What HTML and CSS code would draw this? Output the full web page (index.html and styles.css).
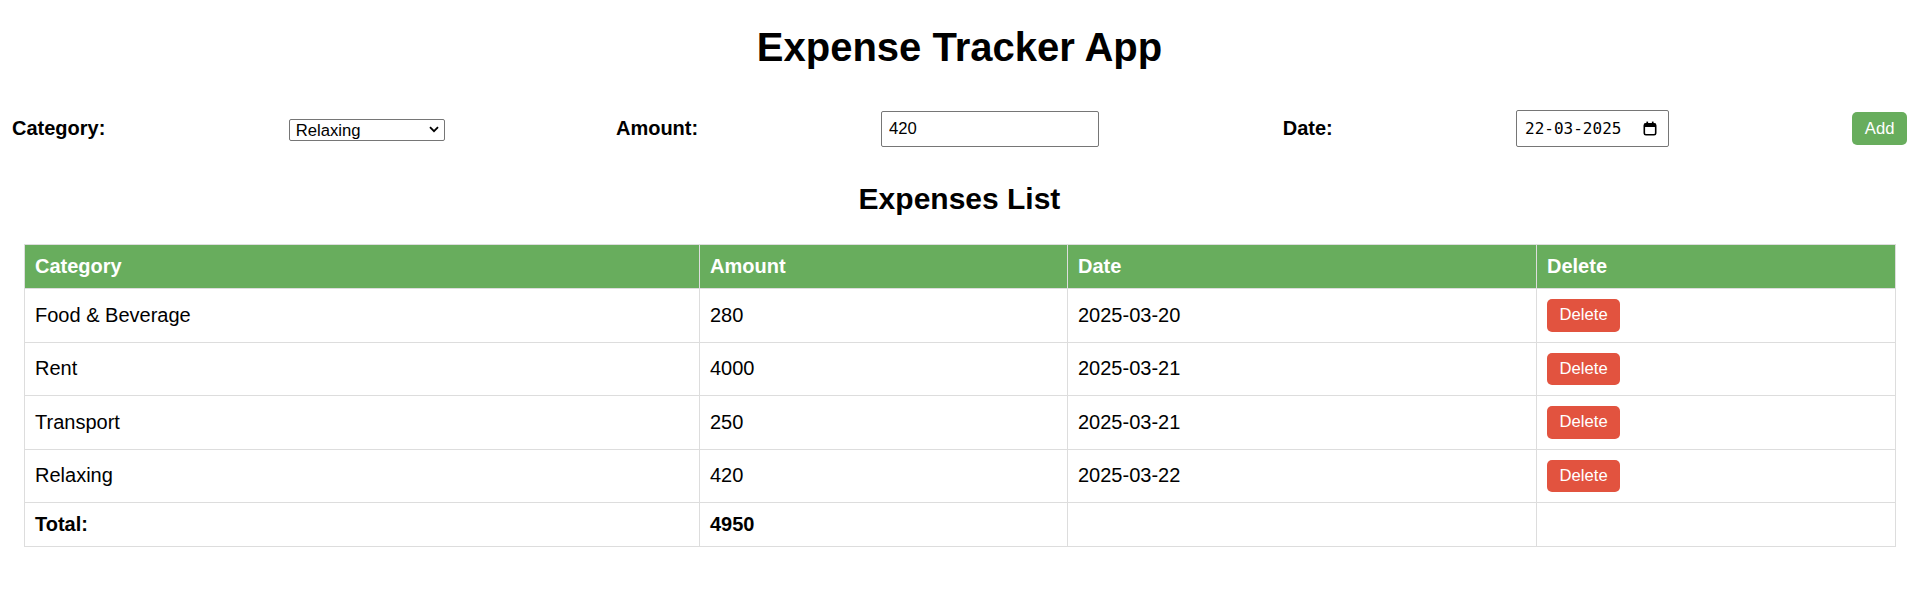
FILE: index.html
```html
<!DOCTYPE html>
<html lang="en">
<head>
<meta charset="utf-8">
<title>Expense Tracker App</title>
<link rel="stylesheet" href="styles.css">
</head>
<body>
<div class="app">
  <h1 class="title">Expense Tracker App</h1>
  <div class="input-section">
    <label class="field-label" for="category-select">Category:</label>
    <div class="select-wrap">
      <select id="category-select" class="select">
        <option>Food &amp; Beverage</option>
        <option>Rent</option>
        <option>Transport</option>
        <option selected>Relaxing</option>
      </select>
      <svg class="chevron" width="10" height="7" viewBox="0 0 10 7" aria-hidden="true"><polyline points="1,1.2 5,5.2 9,1.2" fill="none" stroke="#000" stroke-width="1.8"/></svg>
    </div>
    <label class="field-label" for="amount-input">Amount:</label>
    <input id="amount-input" class="text-input" type="text" value="420">
    <label class="field-label" for="date-input">Date:</label>
    <div class="date-field">
      <input id="date-input" class="date-text" type="text" value="22-03-2025">
      <svg class="cal-icon" width="14" height="15" viewBox="0 0 14 15" aria-hidden="true">
        <rect x="1.3" y="2.8" width="11.4" height="11" rx="1.6" fill="none" stroke="#000" stroke-width="1.6"/>
        <rect x="1.3" y="2.8" width="11.4" height="3.2" fill="#000"/>
        <rect x="3.4" y="0.6" width="1.7" height="3" fill="#000"/>
        <rect x="8.9" y="0.6" width="1.7" height="3" fill="#000"/>
      </svg>
    </div>
    <button class="btn btn-add" type="button">Add</button>
  </div>
  <h2 class="subtitle">Expenses List</h2>
  <div class="table-wrap">
    <table class="expense-table">
      <colgroup>
        <col class="col-cat">
        <col class="col-amt">
        <col class="col-date">
        <col class="col-del">
      </colgroup>
      <thead>
        <tr><th>Category</th><th>Amount</th><th>Date</th><th>Delete</th></tr>
      </thead>
      <tbody>
        <tr><td>Food &amp; Beverage</td><td>280</td><td>2025-03-20</td><td><button class="btn btn-delete" type="button">Delete</button></td></tr>
        <tr><td>Rent</td><td>4000</td><td>2025-03-21</td><td><button class="btn btn-delete" type="button">Delete</button></td></tr>
        <tr><td>Transport</td><td>250</td><td>2025-03-21</td><td><button class="btn btn-delete" type="button">Delete</button></td></tr>
        <tr><td>Relaxing</td><td>420</td><td>2025-03-22</td><td><button class="btn btn-delete" type="button">Delete</button></td></tr>
      </tbody>
      <tfoot>
        <tr class="total-row"><td>Total:</td><td>4950</td><td></td><td></td></tr>
      </tfoot>
    </table>
  </div>
</div>
</body>
</html>
```
FILE: styles.css
```css
html, body {
  margin: 0;
  padding: 0;
  background: #ffffff;
}

body {
  font-family: "Liberation Sans", Arial, sans-serif;
  color: #000000;
  font-size: 20px;
}

.app {
  padding: 0 12px;
}

.title {
  font-size: 40px;
  font-weight: bold;
  text-align: center;
  margin: 25px 0 40px;
  line-height: normal;
}

.input-section {
  display: flex;
  justify-content: space-between;
  align-items: center;
  height: 37px;
}

.field-label {
  font-size: 20px;
  font-weight: bold;
}

.select-wrap {
  position: relative;
  width: 156px;
  height: 22px;
  margin-right: -12px;
}

.select {
  appearance: none;
  -webkit-appearance: none;
  box-sizing: border-box;
  width: 100%;
  height: 100%;
  border: 1px solid #767676;
  border-radius: 2px;
  background: #ffffff;
  font-family: "Liberation Sans", Arial, sans-serif;
  font-size: 16.67px;
  color: #000000;
  padding: 0 20px 0 6px;
  margin: 0;
}

.chevron {
  position: absolute;
  right: 6px;
  top: 8px;
  pointer-events: none;
}

.text-input {
  box-sizing: border-box;
  width: 218px;
  height: 36px;
  border: 1px solid #767676;
  border-radius: 2px;
  padding: 0 6.5px;
  margin: 0;
  font-family: "Liberation Sans", Arial, sans-serif;
  font-size: 16.67px;
  color: #000000;
}

.date-field {
  box-sizing: border-box;
  display: flex;
  align-items: center;
  width: 153px;
  height: 37px;
  border: 1px solid #767676;
  border-radius: 2px;
  padding: 0 11px 0 8px;
}

.date-text {
  flex: 1;
  min-width: 0;
  border: none;
  outline: none;
  padding: 0;
  margin: 0;
  font-family: "DejaVu Sans Mono", monospace;
  font-size: 16px;
  color: #000000;
  background: transparent;
}

.cal-icon {
  flex: none;
  margin-top: -1px;
}

.btn {
  border: none;
  border-radius: 5px;
  color: #ffffff;
  font-family: "Liberation Sans", Arial, sans-serif;
  font-size: 16.67px;
  line-height: normal;
  padding: 6.25px 12.5px;
  margin: 0;
  cursor: pointer;
}

.btn-add {
  background: #68ad5d;
  padding-top: 6.5px;
  padding-bottom: 6.5px;
}

.btn-delete {
  background: #e2533f;
}

.subtitle {
  font-size: 30px;
  font-weight: bold;
  text-align: center;
  margin: 35px 0 28px;
  line-height: normal;
}

.table-wrap {
  padding: 0 13px 0 12px;
}

.expense-table {
  width: 100%;
  border-collapse: collapse;
  table-layout: fixed;
  font-size: 20px;
}

.col-cat { width: 675px; }
.col-amt { width: 368px; }
.col-date { width: 469px; }
.col-del { width: 359px; }

.expense-table th,
.expense-table td {
  border: 1px solid #dddddd;
  padding: 10px;
  text-align: left;
  vertical-align: middle;
}

.expense-table th {
  background: #68ad5d;
  color: #ffffff;
  font-weight: bold;
}

.total-row td {
  font-weight: bold;
}
```
